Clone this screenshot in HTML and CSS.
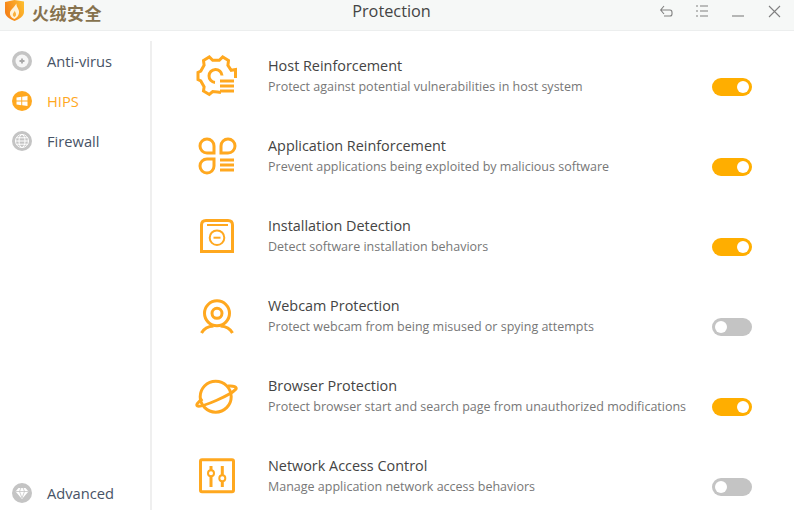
FILE: index.html
```html
<!DOCTYPE html>
<html lang="en">
<head>
  <meta charset="UTF-8" />
  <title>Protection</title>
  <link rel="stylesheet" href="styles.css">
</head>
<body>
  <div class="window">
    <header class="titlebar">
      <div class="brand">
        <svg class="logo" viewBox="0 0 24 24">
          <defs>
            <linearGradient id="shield" x1="0" y1="0.600" x2="1" y2="0.200">
              <stop offset="0" stop-color="#f57f17"/>
              <stop offset="1" stop-color="#fdbd2f"/>
            </linearGradient>
          </defs>
          <path fill="url(#shield)" d="M5 2 L14.500 0 L24 1.500 V12 C24 16.500 19 19 14.500 21 C10 19 5 16.500 5 12 Z"/>
          <path fill="#fff2d8" d="M16.500 3.500 C16 7 19.500 9 19 13 C18.700 16 16.500 17.800 14.500 19 C11.500 18 9.500 15.500 10 12.500 C10.400 10 13.500 8 16.500 3.500 Z"/>
          <path fill="#fbb03b" d="M14.800 10.500 C15 12.500 16.500 13 16 15 C15.800 16 15 16.800 14.300 17 C13 16.300 12.500 15 13 13.800 C13.400 12.800 14.500 12 14.800 10.500 Z"/>
        </svg>
        <span class="brand-name">火绒安全</span>
      </div>
      <div class="title">Protection</div>
      <div class="controls">
        <svg class="control" viewBox="0 0 36 30"><path d="M16 6 L12.700 10 L16 14 M12.700 10 H22 Q24 10 24 12.500 V14 Q24 16 22 16 H16"/></svg>
        <svg class="control" viewBox="0 0 36 30"><path d="M12 6 H14 M16 6 H24 M12 11 H14 M16 11 H24 M12 16 H14 M16 16 H24"/></svg>
        <svg class="control" viewBox="0 0 36 30"><path d="M12 16 H24"/></svg>
        <svg class="control" viewBox="0 0 36 30"><path d="M13 6 L24 17 M24 6 L13 17"/></svg>
      </div>
    </header>

    <div class="content">
      <nav class="sidebar">
        <a class="nav-item">
          <svg class="nav-icon" viewBox="0 0 20 20">
            <circle cx="10" cy="10" r="10" fill="#c4c4c4"/>
            <circle cx="10" cy="10" r="6.500" fill="#f6f6f6"/>
            <path d="M10 7.500 V12.500 M7.500 10 H12.500" stroke="#a8a8a8" stroke-width="1.800" fill="none"/>
          </svg>
          Anti-virus
        </a>
        <a class="nav-item active">
          <svg class="nav-icon" viewBox="0 0 20 20">
            <circle cx="10" cy="10" r="10" fill="#ffa81f"/>
            <path fill="#fff" d="M4.500 6.500 L9.300 5.800 V9.600 H4.500 Z M10.200 5.700 L15.500 5 V9.600 H10.200 Z M4.500 10.400 H9.300 V14.200 L4.500 13.500 Z M10.200 10.400 H15.500 V15 L10.200 14.300 Z"/>
          </svg>
          HIPS
        </a>
        <a class="nav-item">
          <svg class="nav-icon" viewBox="0 0 20 20">
            <circle cx="10" cy="10" r="10" fill="#c4c4c4"/>
            <g fill="none" stroke="#fff" stroke-width="1">
              <circle cx="10" cy="10" r="6.500"/>
              <ellipse cx="10" cy="10" rx="3" ry="6.500"/>
              <path d="M3.500 10 H16.500 M4.500 6.800 H15.500 M4.500 13.200 H15.500"/>
            </g>
          </svg>
          Firewall
        </a>
        <a class="nav-item nav-bottom">
          <svg class="nav-icon" viewBox="0 0 20 20">
            <circle cx="10" cy="10" r="10" fill="#c4c4c4"/>
            <path fill="#fff" d="M6.500 5 H13.500 L16.500 8.500 L10 16 L3.500 8.500 Z"/>
            <path fill="none" stroke="#c4c4c4" stroke-width="0.800" d="M3.500 8.500 H16.500 M7.500 8.500 L10 15 L12.500 8.500 M7.500 8.500 L8.800 5 M12.500 8.500 L11.200 5"/>
          </svg>
          Advanced
        </a>
      </nav>

      <main class="list">
        <section class="row">
          <svg class="row-icon" viewBox="0 0 44 44">
            <path transform="translate(1 0)" d="M25 38.500 L21.500 38 L16.700 37.600 L13.300 40.500 L7.500 37 L8.100 32.700 L4.800 26.900 L2 25.600 V18.400 L4.800 17.100 L8.100 11.300 L7.500 6.500 L13.300 3 L16.700 6.350 H23.300 L26.700 3 L32.500 6.500 L31.900 11.300 L35.200 16.300 L39.500 15.500 V24"/>
            <path d="M27 21.500 A6.500 6.500 0 1 0 20 28.500"/>
            <path d="M25 27 H39 M25 32 H39 M25 37 H39"/>
          </svg>
          <div class="row-text">
            <h2>Host Reinforcement</h2>
            <p>Protect against potential vulnerabilities in host system</p>
            <div class="toggle on"></div>
          </div>
        </section>

        <section class="row">
          <svg class="row-icon" viewBox="0 0 44 44">
            <path d="M19 19 H12 A7 7 0 1 1 19 12 Z"/>
            <path d="M26 19 H33 A7 7 0 1 0 26 12 Z"/>
            <path d="M19 25 H12 A7 7 0 1 0 19 32 Z"/>
            <path d="M25 26 H39 M25 31 H39 M25 36 H39"/>
          </svg>
          <div class="row-text">
            <h2>Application Reinforcement</h2>
            <p>Prevent applications being exploited by malicious software</p>
            <div class="toggle on"></div>
          </div>
        </section>

        <section class="row">
          <svg class="row-icon" viewBox="0 0 44 44">
            <path d="M6.500 37.500 V11 Q6.500 6.500 11 6.500 H33 Q37.500 6.500 37.500 11 V37.500 Z"/>
            <path class="thin" d="M12 11 H33"/>
            <circle class="thin" cx="22" cy="23.700" r="7.300"/>
            <path class="thin" d="M18.500 23.700 H25.500"/>
          </svg>
          <div class="row-text">
            <h2>Installation Detection</h2>
            <p>Detect software installation behaviors</p>
            <div class="toggle on"></div>
          </div>
        </section>

        <section class="row">
          <svg class="row-icon" viewBox="0 0 44 44">
            <circle cx="22" cy="19.300" r="12.500"/>
            <circle cx="22" cy="19.300" r="5"/>
            <path d="M6.500 39 Q10 32.500 18.500 32"/>
            <path d="M25.500 32 Q34 32.500 37.500 39"/>
          </svg>
          <div class="row-text">
            <h2>Webcam Protection</h2>
            <p>Protect webcam from being misused or spying attempts</p>
            <div class="toggle"></div>
          </div>
        </section>

        <section class="row">
          <svg class="row-icon" viewBox="0 0 44 44">
            <circle cx="20.700" cy="22.700" r="15.500"/>
            <path d="M7.500 25 C2 28.500 1 31 2.500 32 C6 34 36 21 41 15 C42 13 39 11.500 33 12"/>
          </svg>
          <div class="row-text">
            <h2>Browser Protection</h2>
            <p>Protect browser start and search page from unauthorized modifications</p>
            <div class="toggle on"></div>
          </div>
        </section>

        <section class="row">
          <svg class="row-icon" viewBox="0 0 44 44">
            <rect x="5.500" y="5.800" width="33" height="32" rx="1.500"/>
            <path d="M16 12 V33 M27.300 12 V33"/>
            <circle class="knob" cx="16" cy="19.300" r="3"/>
            <circle class="knob" cx="27.300" cy="24.300" r="3"/>
          </svg>
          <div class="row-text">
            <h2>Network Access Control</h2>
            <p>Manage application network access behaviors</p>
            <div class="toggle"></div>
          </div>
        </section>
      </main>
    </div>
  </div>
</body>
</html>
```

FILE: styles.css
```css
body {
  margin: 0;
  background: #fff;
  font-family: "Open Sans", "Noto Sans CJK SC", sans-serif;
  overflow: hidden;
}

.window {
  height: 510px;
  display: flex;
  flex-direction: column;
}

.titlebar {
  height: 30px;
  flex: none;
  display: grid;
  grid-template-columns: 300px 183px 1fr;
  background: #f6f8f7;
  border-bottom: 1px solid #eceeee;
}

.brand {
  display: flex;
  align-items: flex-start;
}

.logo {
  width: 24px;
  height: 24px;
}

.brand-name {
  margin: 2px 0 0 8px;
  font-family: "Noto Sans CJK SC", sans-serif;
  font-weight: 700;
  font-size: 17px;
  line-height: 21px;
  letter-spacing: 0.5px;
  color: #86724e;
}

.title {
  text-align: center;
  font-size: 16.300px;
  line-height: 23px;
  color: #444;
}

.controls {
  display: flex;
  justify-content: flex-end;
  padding-right: 2px;
}

.control {
  width: 36px;
  height: 30px;
  fill: none;
  stroke: #808080;
  stroke-width: 1.100;
}

.content {
  flex: 1;
  min-height: 0;
  display: flex;
}

.sidebar {
  width: 150px;
  flex: none;
  margin-top: 10px;
  display: flex;
  flex-direction: column;
  border-right: 2px solid #efefef;
}

.nav-item {
  height: 40px;
  display: flex;
  align-items: center;
  padding-left: 12px;
  font-size: 14.700px;
  color: #475366;
}

.nav-item.active {
  color: #ffa81f;
}

.nav-bottom {
  margin-top: auto;
  height: 34px;
}

.nav-icon {
  width: 20px;
  height: 20px;
  margin-right: 15px;
}

.list {
  flex: 1;
  min-width: 0;
  padding: 5px 42px 0 43px;
  overflow: hidden;
}

.row {
  height: 80px;
  display: flex;
  align-items: center;
}

.row-icon {
  width: 44px;
  height: 44px;
  flex: none;
  margin-right: 29px;
  fill: none;
  stroke: #ffa81f;
  stroke-width: 3;
}

.row-icon .thin {
  stroke-width: 2;
}

.row-icon .knob {
  fill: #fff;
  stroke-width: 2;
}

.row-text {
  flex: 1;
  display: grid;
  grid-template-columns: 1fr 40px;
  align-items: center;
  margin-top: -1px;
}

.row-text h2 {
  grid-column: 1 / 3;
  margin: 0;
  font-size: 14.400px;
  line-height: 21px;
  font-weight: 400;
  color: #444;
}

.row-text p {
  margin: 0;
  font-size: 12.500px;
  line-height: 21px;
  color: #777;
}

.toggle {
  width: 40px;
  height: 18px;
  align-self: start;
  margin-top: 2px;
  border-radius: 9px;
  background: #c4c4c4;
  display: flex;
  align-items: center;
  padding: 0 3px;
  box-sizing: border-box;
}

.toggle::after {
  content: "";
  width: 12px;
  height: 12px;
  border-radius: 50%;
  background: #fff;
}

.toggle.on {
  background: #ffae00;
  justify-content: flex-end;
}
```
